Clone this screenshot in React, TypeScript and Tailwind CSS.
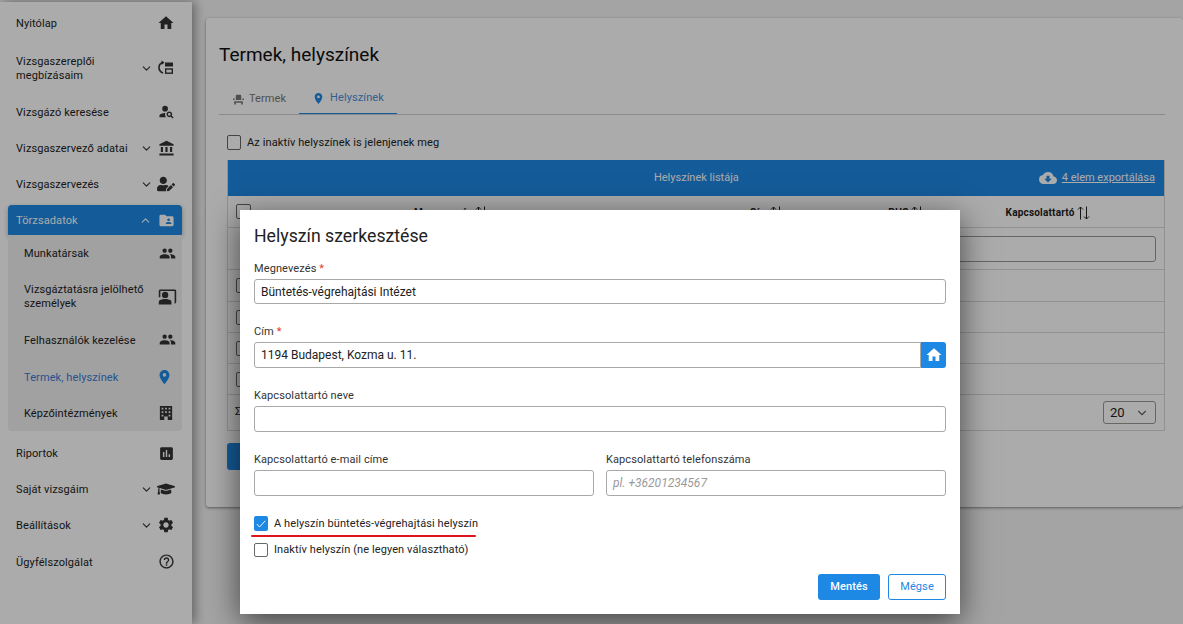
import React from 'react';
import { ChevronDown, ChevronUp } from 'lucide-react';
import {
  MdHome,
  MdPersonSearch,
  MdAccountBalance,
  MdPeople,
  MdFolderShared,
  MdCoPresent,
  MdLocationOn,
  MdAssessment,
  MdSettings,
  MdHelpOutline,
  MdCloudDownload,
  MdEventSeat,
} from 'react-icons/md';
import { FaGraduationCap, FaUserEdit } from 'react-icons/fa';

const AssignIcon = () => (
  <svg width="18" height="18" viewBox="0 0 18 18" fill="none">
    <path d="M6 3.5C3.5 4 2 6 2 8.5S3.5 13 6 14" stroke="currentColor" strokeWidth="1.6" />
    <path d="M4.5 1.5 7.5 3.6 4.5 6z" fill="currentColor" />
    <rect x="8" y="3.5" width="8" height="4" fill="currentColor" />
    <rect x="8.7" y="10" width="6.6" height="4.2" stroke="currentColor" strokeWidth="1.4" />
  </svg>
);

const BuildingIcon = () => (
  <svg width="14" height="16" viewBox="0 0 16 18" fill="currentColor" className="mr-[3px]">
    <path
      fillRule="evenodd"
      d="M1 1h14v16H10v-4H6v4H1zM3 3v2h2V3zM7 3v2h2V3zM11 3v2h2V3zM3 7v2h2V7zM7 7v2h2V7zM11 7v2h2V7zM3 11v2h2v-2zM11 11v2h2v-2z"
    />
  </svg>
);

const SortArrows = () => (
  <svg width="13" height="14" viewBox="0 0 13 14" fill="none" stroke="currentColor" strokeWidth="1">
    <path d="M3.5 13.5V1M1 3.5 3.5 1 6 3.5" />
    <path d="M9.5 .5V13M7 10.5 9.5 13 12 10.5" />
  </svg>
);

const Row = ({ label, icon, chevron, className = '' }: { label: React.ReactNode; icon: React.ReactNode; chevron?: boolean; className?: string }) => (
  <div className={`flex items-center pl-4 pr-[15px] ${className}`}>
    <span className="flex-1 whitespace-nowrap pt-[2px] text-[11px] leading-[14px] tracking-[0.1px]">{label}</span>
    {chevron && <ChevronDown size={13} className="mr-[2px] text-[#333]" />}
    <span className="flex w-[22px] justify-center text-[#333]">{icon}</span>
  </div>
);

const SubRow = ({ label, icon, className = '' }: { label: React.ReactNode; icon: React.ReactNode; className?: string }) => (
  <div className={`flex items-center pl-4 pr-[4px] ${className}`}>
    <span className="flex-1 whitespace-nowrap pt-[2px] text-[11px] leading-[14px] tracking-[0.1px]">{label}</span>
    <span className="flex w-[22px] justify-center text-[#333]">{icon}</span>
  </div>
);

const Field = ({ label, required, value, placeholder, className = '', height = 'h-[26px]' }: { label: string; required?: boolean; value?: string; placeholder?: string; className?: string; height?: string }) => (
  <div className={className}>
    <div className="mb-[3px] text-[11px] leading-[14px] tracking-[0.1px] text-[#333]">
      {label}
      {required && <span className="text-[#e53935]"> *</span>}
    </div>
    <div className={`flex items-center rounded-[3px] border border-[#a8a8a8] px-[6px] text-[12px] text-[#222] ${height}`}>
      {value}
      {placeholder && <span className="italic text-[#9a9a9a]">{placeholder}</span>}
    </div>
  </div>
);

const App: React.FC = () => {
  return (
    <div className="relative h-[624px] w-[1183px] overflow-hidden bg-[#f5f5f5] font-['Roboto',sans-serif] text-[#222]">
      <div className="flex h-full pt-[2px]">
        {/* sidebar */}
        <aside className="h-full w-[192px] shrink-0 bg-white pt-[5px] shadow-[3px_0_10px_rgba(0,0,0,0.4)]">
          <Row label="Nyitólap" icon={<MdHome size={18} />} className="h-[32px]" />
          <Row label={<>Vizsgaszereplői<br />megbízásaim</>} chevron icon={<AssignIcon />} className="mt-[11px] h-[36px]" />
          <Row label="Vizsgázó keresése" icon={<MdPersonSearch size={17} />} className="mt-[7px] h-[37px]" />
          <Row label="Vizsgaszervező adatai" chevron icon={<MdAccountBalance size={17} />} className="h-[36px]" />
          <Row label="Vizsgaszervezés" chevron icon={<FaUserEdit size={18} />} className="h-[36px]" />
          <div className="ml-2 mr-[10px] mt-[3px]">
            <div className="flex h-[30px] items-center rounded-t-[4px] rounded-b-[1px] bg-[#1e88e5] pl-2 pr-[7px] text-white shadow-[0_2px_5px_rgba(0,0,0,0.3)]">
              <span className="flex-1 pt-[2px] text-[11px] tracking-[0.1px]">Törzsadatok</span>
              <ChevronUp size={13} className="mr-[6px]" />
              <MdFolderShared size={17} />
            </div>
            <div className="rounded-b-[4px] bg-[#f0f0f0] pb-[1px]">
              <SubRow label="Munkatársak" icon={<MdPeople size={17} />} className="h-[36px]" />
              <SubRow label={<>Vizsgáztatásra jelölhető<br />személyek</>} icon={<MdCoPresent size={19} />} className="h-[50px]" />
              <SubRow label="Felhasználók kezelése" icon={<MdPeople size={17} />} className="h-[37px]" />
              <SubRow label={<span className="text-[#3a7bd5]">Termek, helyszínek</span>} icon={<MdLocationOn size={18} className="mr-[5px] text-[#1e88e5]" />} className="h-[37px]" />
              <SubRow label="Képzőintézmények" icon={<BuildingIcon />} className="h-[35px]" />
            </div>
          </div>
          <Row label="Riportok" icon={<MdAssessment size={17} />} className="mt-[4px] h-[36px]" />
          <Row label="Saját vizsgáim" chevron icon={<FaGraduationCap size={18} />} className="h-[36px]" />
          <Row label="Beállítások" chevron icon={<MdSettings size={18} />} className="h-[36px]" />
          <Row label="Ügyfélszolgálat" icon={<MdHelpOutline size={17} />} className="h-[37px]" />
        </aside>

        {/* page content */}
        <main className="flex-1 pl-[14px] pt-[16px]">
          <div className="h-[489px] rounded-[3px] bg-white pl-[13px] pr-[18px] pt-[25px] shadow-[0_1px_3px_rgba(0,0,0,0.45)]">
            <h1 className="text-[19px] font-normal leading-[24px] text-[#111]">Termek, helyszínek</h1>
            <div className="mt-[17px] flex h-[31px] border-b border-[#d0d0d0] text-[11px] tracking-[0.1px]">
              <div className="flex w-[80px] items-center justify-center gap-[4px] text-[#777]">
                <MdEventSeat size={13} />
                Termek
              </div>
              <div className="flex w-[98px] items-center justify-center gap-[5px] border-b border-[#1e88e5] text-[#4a8fd8]">
                <MdLocationOn size={13} className="text-[#1e88e5]" />
                Helyszínek
              </div>
            </div>
            <div className="ml-[8px]">
              <div className="mt-[20px] flex items-center gap-[6px] text-[11px] leading-[15px] tracking-[0.1px]">
                <span className="h-[15px] w-[14px] rounded-[2px] border border-[#666]" />
                Az inaktív helyszínek is jelenjenek meg
              </div>
              <div className="mt-[10px] border border-t-0 border-[#d8d8d8]">
                <div className="flex h-[36px] items-center bg-[#1e88e5] pr-[9px] text-[11px] text-white">
                  <span className="flex-1 pl-[126px] text-center">Helyszínek listája</span>
                  <span className="flex items-center gap-[5px] underline">
                    <MdCloudDownload size={18} />
                    4 elem exportálása
                  </span>
                </div>
                <div className="flex h-[32px] items-center border-b border-[#d8d8d8] pt-[2px] text-[10px] font-bold tracking-[0.2px]">
                  <span className="-mt-[2px] ml-[8px] h-[15px] w-[15px] rounded-[2px] border border-[#666]" />
                  <span className="ml-[163px] flex items-center gap-[2px]">Megnevezés<SortArrows /></span>
                  <span className="ml-[262px] flex items-center gap-[2px]">Cím<SortArrows /></span>
                  <span className="ml-[105px] flex items-center gap-[2px]">PHS<SortArrows /></span>
                  <span className="ml-[82px] flex items-center gap-[2px]">Kapcsolattartó<SortArrows /></span>
                </div>
                <div className="flex h-[42px] items-center justify-end border-b border-[#d8d8d8] pr-[8px]">
                  <span className="h-[26px] w-[400px] rounded-[3px] border border-[#999]" />
                </div>
                {[32, 31, 31, 31].map((h, i) => (
                  <div key={i} className={`flex items-center border-b border-[#d8d8d8] ${h === 32 ? 'h-[32px]' : 'h-[31px]'}`}>
                    <span className="ml-[8px] h-[15px] w-[14px] rounded-[2px] border border-[#666]" />
                  </div>
                ))}
                <div className="flex h-[35px] items-center justify-between pl-[7px] pr-[8px] text-[11px]">
                  <span>Σ</span>
                  <span className="flex h-[23px] w-[53px] items-center justify-between rounded-[3px] border border-[#999] pl-[6px] pr-[6px] text-[13px]">
                    20
                    <ChevronDown size={14} className="text-[#666]" />
                  </span>
                </div>
              </div>
              <div className="mt-[12px] h-[27px] w-[60px] rounded-[3px] bg-[#1e88e5]" />
            </div>
          </div>
        </main>
      </div>

      {/* dimmed backdrop and dialog */}
      <div className="absolute inset-0 bg-black/[0.33]" />
      <div className="absolute left-[240px] top-[210px] h-[404px] w-[720px] bg-white px-[14px] pt-[15px] shadow-[0_8px_30px_rgba(0,0,0,0.6)]">
        <h2 className="text-[17.7px] font-normal leading-[22px] text-[#222]">Helyszín szerkesztése</h2>
        <Field label="Megnevezés" required value="Büntetés-végrehajtási Intézet" height="h-[25px]" className="mt-[15px]" />
        <div className="mt-[21px]">
          <div className="mb-[3px] text-[11px] leading-[14px] tracking-[0.1px] text-[#333]">
            Cím <span className="text-[#e53935]">*</span>
          </div>
          <div className="flex h-[26px]">
            <div className="flex flex-1 items-center rounded-l-[3px] border border-[#a8a8a8] px-[6px] text-[12px]">1194 Budapest, Kozma u. 11.</div>
            <div className="flex w-[25px] items-center justify-center rounded-r-[3px] bg-[#1e88e5] text-white">
              <MdHome size={18} />
            </div>
          </div>
        </div>
        <Field label="Kapcsolattartó neve" className="mt-[21px]" />
        <div className="mt-[21px] flex gap-[12px]">
          <Field label="Kapcsolattartó e-mail címe" className="flex-1" />
          <Field label="Kapcsolattartó telefonszáma" placeholder="pl. +36201234567" className="flex-1" />
        </div>
        <div className="mt-[20px] flex items-center gap-[6px] text-[11px] leading-[15px] tracking-[0.1px]">
          <span className="flex h-[15px] w-[14px] items-center justify-center rounded-[2px] bg-[#1e88e5]">
            <svg width="10" height="8" viewBox="0 0 10 8" fill="none" stroke="white" strokeWidth="0.9">
              <path d="M.8 4 3.6 7 9.2.8" />
            </svg>
          </span>
          A helyszín büntetés-végrehajtási helyszín
        </div>
        <div className="-ml-[3px] mt-[4px] h-[2px] w-[225px] rounded-full bg-[#e0141c]" />
        <div className="mt-[6px] flex items-center gap-[6px] text-[11px] leading-[14px] tracking-[0.1px]">
          <span className="h-[14px] w-[14px] rounded-[2px] border border-[#666]" />
          Inaktív helyszín (ne legyen választható)
        </div>
        <div className="mt-[17px] flex justify-end gap-[8px] text-[11px] tracking-[0.1px]">
          <button className="h-[26px] w-[62px] rounded-[3px] bg-[#1e88e5] font-medium text-white">Mentés</button>
          <button className="h-[26px] w-[58px] rounded-[3px] border border-[#1e88e5] text-[#1e88e5]">Mégse</button>
        </div>
      </div>
    </div>
  );
};

export default App;
